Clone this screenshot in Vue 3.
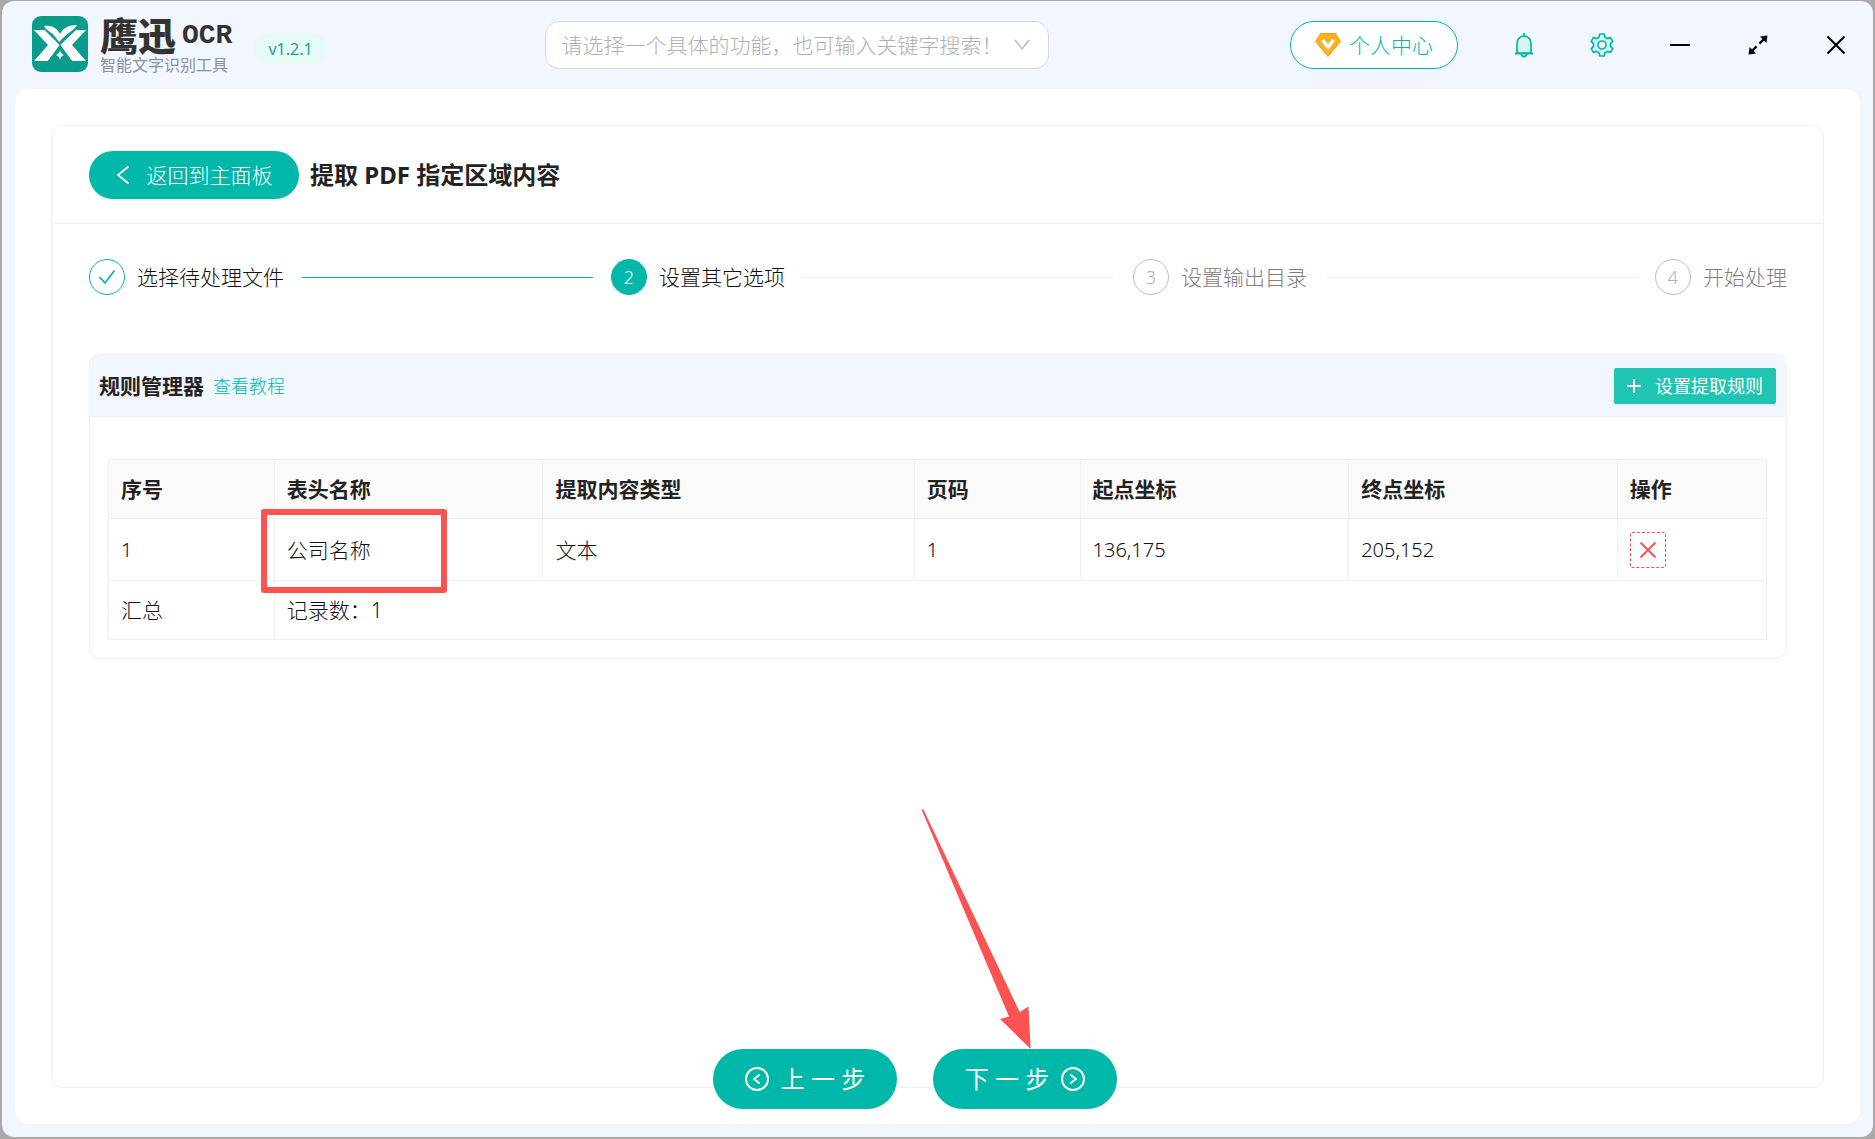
<script setup>
import { ref } from 'vue'

const keyword = ref('')

const steps = [
  { title: '选择待处理文件', state: 'done' },
  { title: '设置其它选项', state: 'active' },
  { title: '设置输出目录', state: 'wait' },
  { title: '开始处理', state: 'wait' },
]

const columns = ['序号', '表头名称', '提取内容类型', '页码', '起点坐标', '终点坐标', '操作']

const rules = [
  { name: '公司名称', type: '文本', page: 1, start: '136,175', end: '205,152', marked: true },
]
</script>

<template>
  <div class="desktop">
    <div class="window">
      <header class="titlebar">
        <div class="brand">
          <svg class="logo" viewBox="0 0 56 56" aria-hidden="true">
            <rect width="56" height="56" rx="9" fill="#099c8b" />
            <path d="M2 14H13L28 29L16 45H2L16 29Z" fill="#fff" />
            <path d="M54 14H43L28 29L40 45H54L40 29Z" fill="#fff" />
            <path d="M12 10C20 9 25 12 28 18C31 12 37 9 45 9C42 14 38 16 34 19L27 26L21 18C18 16 14 14 12 10Z" fill="#fff" />
            <path d="M14 14L28 28L44 13" fill="none" stroke="#099c8b" stroke-width="1.400" />
            <path d="M28 28.500L16 45H40Z" fill="#099c8b" />
            <path d="M28 34Q28.600 38 32 39Q28.600 40 28 44Q27.400 40 24 39Q27.400 38 28 34Z" fill="#fff" />
          </svg>
          <div class="brand-text">
            <div class="brand-name">鹰迅<span class="latin">OCR</span></div>
            <div class="brand-sub">智能文字识别工具</div>
          </div>
          <span class="version">v1.2.1</span>
        </div>

        <label class="search">
          <input v-model="keyword" type="text" aria-label="功能搜索" placeholder="请选择一个具体的功能，也可输入关键字搜索！" />
          <svg width="16" height="12" viewBox="0 0 16 12" aria-hidden="true">
            <path d="M1 1L8 10L15 1" fill="none" stroke="#bfbfbf" stroke-width="1.6" />
          </svg>
        </label>

        <div class="actions">
          <button class="profile" type="button">
            <svg width="26" height="24" viewBox="0 0 26 24" aria-hidden="true">
              <path d="M5.500 .5H20.500L25.500 8.500L13 23.500L.5 8.500Z" fill="#ffb020" stroke="#f79a12" />
              <path d="M7.500 7L13 14L18.500 7" fill="none" stroke="#fff" stroke-width="3.600" />
            </svg>
            <span>个人中心</span>
          </button>
          <button class="icon-btn" type="button" aria-label="通知">
            <svg viewBox="0 0 24 26" aria-hidden="true">
              <path d="M5 21V11.500C5 7 8 4 12 4S19 7 19 11.500V21Z" fill="#d9f5f0" stroke="#00b8aa" stroke-width="1.700" />
              <path d="M3 21.500H21M12 1V4" fill="none" stroke="#00b8aa" stroke-width="1.800" />
              <path d="M9.500 22Q10 24.600 12 24.600T14.500 22" fill="none" stroke="#00b8aa" stroke-width="1.700" />
            </svg>
          </button>
          <button class="icon-btn" type="button" aria-label="设置">
            <svg viewBox="0 0 24 26" aria-hidden="true">
              <path d="M9.800 2H14.200L15 5.200L17.400 6.600L20.600 5.600L22.800 9.400L20.500 11.700V14.300L22.800 16.600L20.600 20.400L17.400 19.400L15 20.800L14.200 24H9.800L9 20.800L6.600 19.400L3.400 20.400L1.200 16.600L3.500 14.300V11.700L1.200 9.400L3.400 5.600L6.600 6.600L9 5.200Z" fill="#d9f5f0" stroke="#00b8aa" stroke-width="1.700" stroke-linejoin="round" />
              <circle cx="12" cy="13" r="4" fill="#f2f6ff" stroke="#00b8aa" stroke-width="1.700" />
            </svg>
          </button>
          <button class="icon-btn" type="button" aria-label="最小化">
            <svg viewBox="0 0 24 26" aria-hidden="true">
              <path d="M2 13H22" stroke="#000" stroke-width="2" />
            </svg>
          </button>
          <button class="icon-btn" type="button" aria-label="最大化">
            <svg viewBox="0 0 24 26" aria-hidden="true">
              <path d="M21.500 3.500L14 4.600L20.400 11Z M2.500 22.500L3.600 15L10 21.400Z" />
              <path d="M19 6L13.400 11.600M5 20L10.600 14.400" stroke="#000" stroke-width="2.200" />
            </svg>
          </button>
          <button class="icon-btn" type="button" aria-label="关闭">
            <svg viewBox="0 0 24 26" aria-hidden="true">
              <path d="M3.500 4.500L20.500 21.500M20.500 4.500L3.500 21.500" stroke="#000" stroke-width="2.100" />
            </svg>
          </button>
        </div>
      </header>

      <main class="content">
        <section class="panel">
          <div class="panel-head">
            <button class="back" type="button">
              <svg width="14" height="20" viewBox="0 0 14 20" aria-hidden="true">
                <path d="M12.500 1.500L2 10L12.500 18.500" fill="none" stroke="#fff" stroke-width="1.800" />
              </svg>
              <span>返回到主面板</span>
            </button>
            <h1>提取 PDF 指定区域内容</h1>
          </div>

          <div class="panel-body">
            <ol class="steps">
              <li v-for="(step, i) in steps" :key="step.title" :class="['step', step.state]">
                <span class="dot">
                  <svg v-if="step.state === 'done'" width="18" height="16" viewBox="0 0 18 16" aria-hidden="true">
                    <path d="M1.500 8L7 14L16.500 1.500" fill="none" stroke="#00b8aa" stroke-width="1.700" />
                  </svg>
                  <template v-else>{{ i + 1 }}</template>
                </span>
                <span class="step-title">{{ step.title }}</span>
              </li>
            </ol>

            <section class="rules">
              <div class="rules-head">
                <h2>规则管理器</h2>
                <a href="#">查看教程</a>
                <button class="add" type="button">
                  <svg width="14" height="14" viewBox="0 0 14 14" aria-hidden="true">
                    <path d="M7 0V14M0 7H14" stroke="#fff" stroke-width="2" />
                  </svg>
                  <span>设置提取规则</span>
                </button>
              </div>
              <div class="rules-body">
                <table>
                  <colgroup>
                    <col class="c-narrow" />
                    <col class="c-mid" />
                    <col class="c-wide" />
                    <col class="c-narrow" />
                    <col class="c-mid" />
                    <col class="c-mid" />
                    <col />
                  </colgroup>
                  <thead>
                    <tr>
                      <th v-for="c in columns" :key="c" scope="col">{{ c }}</th>
                    </tr>
                  </thead>
                  <tbody>
                    <tr v-for="(rule, i) in rules" :key="rule.name">
                      <td class="num">{{ i + 1 }}</td>
                      <td class="name">{{ rule.name }}<span v-if="rule.marked" class="mark"></span></td>
                      <td>{{ rule.type }}</td>
                      <td class="num">{{ rule.page }}</td>
                      <td class="num">{{ rule.start }}</td>
                      <td class="num">{{ rule.end }}</td>
                      <td>
                        <button class="remove" type="button" aria-label="删除">
                          <svg width="18" height="18" viewBox="0 0 18 18" aria-hidden="true">
                            <path d="M1.500 1.500L16.500 16.500M16.500 1.500L1.500 16.500" stroke="#ff4d4f" stroke-width="1.800" />
                          </svg>
                        </button>
                      </td>
                    </tr>
                  </tbody>
                  <tfoot>
                    <tr>
                      <td>汇总</td>
                      <td colspan="6">记录数：{{ rules.length }}</td>
                    </tr>
                  </tfoot>
                </table>
              </div>
            </section>
          </div>

          <nav class="pager">
            <button type="button">
              <svg width="24" height="24" viewBox="0 0 24 24" aria-hidden="true">
                <circle cx="12" cy="12" r="11" fill="none" stroke="#fff" stroke-width="2" />
                <path d="M14.800 7.500L9 12L14.800 16.500" fill="none" stroke="#fff" stroke-width="1.900" />
              </svg>
              <span>上 一 步</span>
            </button>
            <button class="next" type="button">
              <span>下 一 步</span>
              <svg width="24" height="24" viewBox="0 0 24 24" aria-hidden="true">
                <circle cx="12" cy="12" r="11" fill="none" stroke="#fff" stroke-width="2" />
                <path d="M9.200 7.500L15 12L9.200 16.500" fill="none" stroke="#fff" stroke-width="1.900" />
              </svg>
              <svg class="arrow" width="112" height="240" viewBox="0 0 112 240" aria-hidden="true">
                <path d="M1.500 .5L3.500 .5L99.700 203L108.500 197.500L110.700 240L80 210L89 207.500Z" fill="#fb5352" />
              </svg>
            </button>
          </nav>
        </section>
      </main>
    </div>
  </div>
</template>

<style>
body {
  margin: 0;
  background: #a9a9a9;
}
</style>

<style scoped>
.desktop {
  --teal: #00b8aa;
  --line: #f0f0f0;
  box-sizing: border-box;
  display: flex;
  min-height: 100vh;
  padding: 1px 2px 2px;
  font-family: "Noto Sans", "Noto Sans CJK SC", sans-serif;
  font-size: 21px;
  font-weight: 300;
  line-height: 32px;
  color: #111;
}

.desktop *,
.desktop *::before,
.desktop *::after {
  box-sizing: border-box;
}

button,
input {
  margin: 0;
  padding: 0;
  border: 0;
  font: inherit;
  color: inherit;
  background: none;
}

button {
  display: flex;
  align-items: center;
  justify-content: center;
  cursor: pointer;
}

svg {
  display: block;
  flex: none;
}

.window {
  flex: 1;
  display: flex;
  flex-direction: column;
  min-width: 0;
  border-radius: 12px;
  background: #f2f6ff;
}

/* title bar */
.titlebar {
  display: grid;
  grid-template-columns: 29% 504px 1fr;
  align-items: center;
  height: 88px;
}

.brand {
  display: flex;
  align-items: center;
  padding: 0 0 2px 30px;
}

.logo {
  width: 56px;
  height: 56px;
}

.brand-text {
  margin-left: 12px;
}

.brand-name {
  display: flex;
  align-items: center;
  height: 36px;
  font-family: "Noto Sans CJK SC", sans-serif;
  font-size: 38px;
  font-weight: 900;
  line-height: 36px;
  color: #333;
}

.latin {
  margin: 4px 0 0 6px;
  font-family: "Liberation Mono", monospace;
  font-size: 28px;
  font-weight: 700;
}

.brand-sub {
  padding-top: 3px;
  font-family: "Noto Sans CJK SC", sans-serif;
  font-size: 16px;
  font-weight: 400;
  line-height: 18px;
  color: #8a909e;
}

.version {
  margin: 10px 0 0 22px;
  padding: 0 14px;
  border-radius: 16px;
  font-size: 16px;
  font-weight: 400;
  line-height: 32px;
  color: #12a594;
  background: #e6faf7;
}

.search {
  display: flex;
  align-items: center;
  height: 48px;
  padding: 0 18px 0 16px;
  border: 1px solid #d9d9d9;
  border-radius: 14px;
  background: #fff;
}

.search input {
  flex: 1;
  min-width: 0;
  height: 32px;
  outline: none;
}

.search input::placeholder {
  color: #b0b0b0;
  opacity: 1;
}

.actions {
  display: flex;
  align-items: center;
  justify-content: flex-end;
  gap: 54px;
  padding-right: 25px;
}

.profile {
  gap: 8px;
  width: 168px;
  height: 48px;
  border: 1px solid var(--teal);
  border-radius: 24px;
  color: var(--teal);
  background: #fff;
  box-shadow: 0 2px 0 rgba(0, 0, 0, 0.02);
}

.icon-btn {
  width: 24px;
  height: 26px;
}

.icon-btn svg {
  width: 24px;
  height: 26px;
}

/* page */
.content {
  flex: 1;
  display: flex;
  margin: 0 13px 13px;
  padding: 36px;
  border-radius: 14px;
  background: #fff;
}

.panel {
  position: relative;
  flex: 1;
  min-width: 0;
  padding-bottom: 80px;
  border: 1px solid var(--line);
  border-radius: 11px;
}

.panel-head {
  display: flex;
  align-items: center;
  gap: 11px;
  height: 98px;
  padding: 0 36px 0 37px;
  border-bottom: 1px solid var(--line);
}

.back {
  gap: 17px;
  width: 210px;
  height: 48px;
  border-radius: 24px;
  color: #fff;
  background: var(--teal);
  box-shadow: 0 2px 0 rgba(0, 0, 0, 0.04);
}

h1,
h2 {
  margin: 0;
  font-weight: 700;
  color: #222;
}

h1 {
  font-size: 24px;
}

h2 {
  font-size: 21px;
}

.panel-body {
  padding: 35px 36px 0 37px;
}

/* steps */
.steps {
  display: flex;
  margin: 0;
  padding: 0;
  list-style: none;
}

.step {
  flex: 1;
  display: flex;
  align-items: center;
}

.step:last-child {
  flex: none;
}

.step:not(:last-child)::after {
  content: "";
  flex: 1;
  height: 1px;
  margin: 0 18px;
  background: var(--line);
}

.step.done:not(:last-child)::after {
  background: var(--teal);
}

.dot {
  display: flex;
  align-items: center;
  justify-content: center;
  width: 36px;
  height: 36px;
  margin-right: 12px;
  border: 1px solid var(--teal);
  border-radius: 50%;
  font-size: 18px;
}

.step.active .dot {
  color: #fff;
  background: var(--teal);
}

.step.wait {
  color: #808080;
}

.step.wait .dot {
  border-color: #bfbfbf;
  color: #b0b0b0;
}

/* rule manager */
.rules {
  margin-top: 59px;
  border: 1px solid var(--line);
  border-radius: 11px;
}

.rules-head {
  display: flex;
  align-items: center;
  gap: 9px;
  height: 62px;
  padding: 0 10px 0 9px;
  border-bottom: 1px solid var(--line);
  border-radius: 10px 10px 0 0;
  background: #f2f6ff;
}

.rules-head a {
  font-size: 18px;
  color: var(--teal);
  text-decoration: none;
}

.add {
  gap: 14px;
  width: 162px;
  height: 36px;
  margin-left: auto;
  border-radius: 2px;
  font-size: 18px;
  font-weight: 400;
  color: #fff;
  background: #1fc4b2;
  box-shadow: 0 2px 0 rgba(0, 0, 0, 0.04);
}

.rules-body {
  padding: 42px 19px 18px 18px;
}

table {
  width: 100%;
  border-collapse: collapse;
  table-layout: fixed;
}

.c-narrow {
  width: 10%;
}

.c-mid {
  width: 16.2%;
}

.c-wide {
  width: 22.4%;
}

th,
td {
  height: 59px;
  padding: 0 12px;
  border: 1px solid var(--line);
  text-align: left;
}

th {
  font-weight: 700;
  color: #222;
  background: #fafafa;
}

tbody td {
  height: 62px;
}

.num {
  font-size: 20px;
}

.name {
  position: relative;
}

.mark {
  position: absolute;
  top: -10px;
  left: -14px;
  width: 186px;
  height: 84px;
  border: 6px solid #fb5352;
  border-radius: 3px;
}

.remove {
  width: 36px;
  height: 36px;
  border: 1px dashed #ff4d4f;
  border-radius: 2px;
}

/* pager straddles the lower edge of the panel */
.pager {
  position: absolute;
  right: 0;
  bottom: -22px;
  left: 0;
  display: flex;
  justify-content: center;
  gap: 36px;
  padding-right: 45px;
}

.pager button {
  position: relative;
  gap: 12px;
  width: 184px;
  height: 60px;
  border-radius: 30px;
  font-size: 24px;
  font-weight: 400;
  color: #fff;
  background: var(--teal);
  box-shadow: 0 2px 0 rgba(0, 0, 0, 0.04);
}

.arrow {
  position: absolute;
  bottom: 60px;
  left: -13px;
}
</style>
